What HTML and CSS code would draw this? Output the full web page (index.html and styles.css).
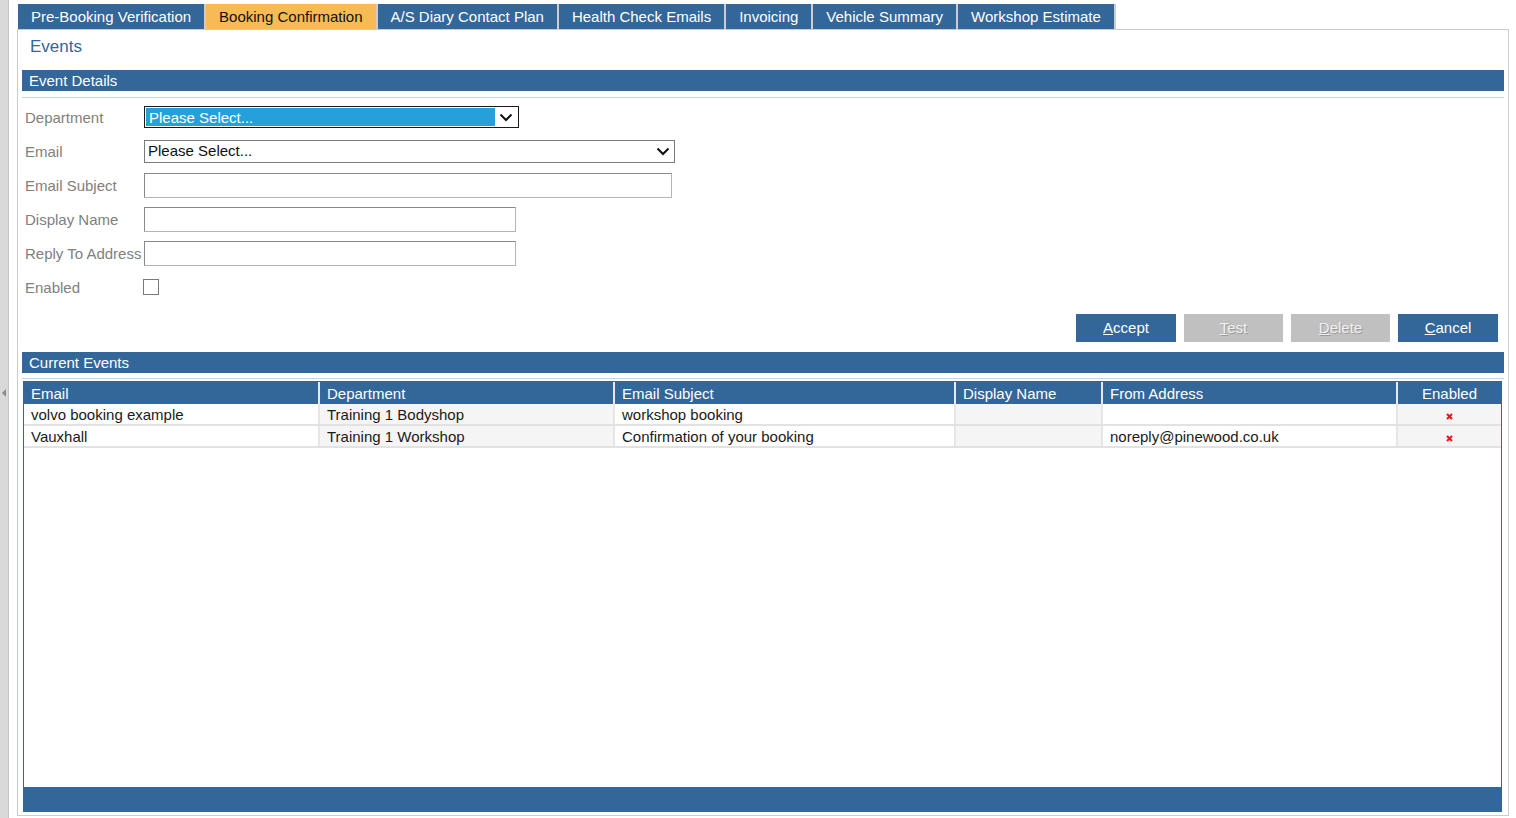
FILE: index.html
```html
<!DOCTYPE html>
<html>
<head>
	<meta charset="UTF-8">
	<title>Events</title>
	<link rel="stylesheet" href="styles.css">
</head>
<body>
<div class="side"><span class="side-arrow"></span></div>
<div class="page">
    <ul class="tabs">
        <li>Pre-Booking Verification</li>
        <li class="active">Booking Confirmation</li>
        <li>A/S Diary Contact Plan</li>
        <li>Health Check Emails</li>
        <li>Invoicing</li>
        <li>Vehicle Summary</li>
        <li>Workshop Estimate</li>
    </ul>

    <div class="panel">
        <h1 class="title">Events</h1>
        <div class="bar">Event Details</div>
        <div class="rule"></div>

        <div class="form">
            <div class="row">
                <label>Department</label>
                <div class="select dept">
                    <span class="sel-text">Please Select...</span>
                    <span class="sel-arrow"><svg width="14" height="9" viewBox="0 0 14 9"><path d="M1.5 1.5 L7 7 L12.5 1.5" fill="none" stroke="#111" stroke-width="2"/></svg></span>
                </div>
            </div>
            <div class="row">
                <label>Email</label>
                <div class="select email">
                    <span class="sel-text">Please Select...</span>
                    <span class="sel-arrow"><svg width="14" height="9" viewBox="0 0 14 9"><path d="M1.5 1.5 L7 7 L12.5 1.5" fill="none" stroke="#111" stroke-width="2"/></svg></span>
                </div>
            </div>
            <div class="row">
                <label>Email Subject</label>
                <input type="text" class="txt wide">
            </div>
            <div class="row">
                <label>Display Name</label>
                <input type="text" class="txt">
            </div>
            <div class="row">
                <label>Reply To Address</label>
                <input type="text" class="txt">
            </div>
            <div class="row">
                <label>Enabled</label>
                <span class="check"></span>
            </div>
        </div>

        <div class="buttons">
            <a href="javascript:;" class="btn"><u>A</u>ccept</a>
            <a href="javascript:;" class="btn off"><u>T</u>est</a>
            <a href="javascript:;" class="btn off"><u>D</u>elete</a>
            <a href="javascript:;" class="btn"><u>C</u>ancel</a>
        </div>

        <div class="bar bar2">Current Events</div>
        <div class="rule rule2"></div>

        <div class="grid">
            <table>
                <thead>
                    <tr>
                        <th class="c1">Email</th>
                        <th class="c2">Department</th>
                        <th class="c3">Email Subject</th>
                        <th class="c4">Display Name</th>
                        <th class="c5">From Address</th>
                        <th class="c6 mid">Enabled</th>
                    </tr>
                </thead>
                <tbody>
                    <tr>
                        <td>volvo booking example</td>
                        <td class="alt">Training 1 Bodyshop</td>
                        <td>workshop booking</td>
                        <td class="alt"></td>
                        <td></td>
                        <td class="alt mid"><svg width="7" height="7" viewBox="0 0 7 7"><path d="M1 1 L6 6 M6 1 L1 6" stroke="#e8141e" stroke-width="2"/></svg></td>
                    </tr>
                    <tr>
                        <td>Vauxhall</td>
                        <td class="alt">Training 1 Workshop</td>
                        <td>Confirmation of your booking</td>
                        <td class="alt"></td>
                        <td>noreply@pinewood.co.uk</td>
                        <td class="alt mid"><svg width="7" height="7" viewBox="0 0 7 7"><path d="M1 1 L6 6 M6 1 L1 6" stroke="#e8141e" stroke-width="2"/></svg></td>
                    </tr>
                </tbody>
            </table>
            <div class="grid-space"></div>
            <div class="grid-foot"></div>
        </div>
    </div>
</div>
</body>
</html>
```

FILE: styles.css
```css
body{
    margin: 0;
    display: flex;
    height: 818px;
    overflow: hidden;
    font-family: "Liberation Sans", Arial, sans-serif;
    font-size: 15px;
    background: #fff;
}
.side{
    width: 9px;
    flex: none;
    background-color: #d9d9d9;
    border-right: 1px solid #c4c4c4;
    padding-top: 389px;
    box-sizing: border-box;
}
.side-arrow{
    display: block;
    width: 0;
    height: 0;
    margin-left: 2px;
    border-top: 4px solid transparent;
    border-bottom: 4px solid transparent;
    border-right: 4px solid #8a8a8a;
}
.page{
    padding-left: 8px;
    width: 1492px;
}
.tabs{
    display: flex;
    margin: 4px 0 0 1px;
    padding: 0;
    height: 25px;
}
.tabs li{
    list-style: none;
    background-color: #336699;
    color: #fff;
    line-height: 24px;
    padding: 1px 13px 0;
    border-right: 2px solid #cdcdcd;
    white-space: nowrap;
}
.tabs li.active{
    background-color: #f6bb55;
    color: #111;
}
.panel{
    height: 787px;
    box-sizing: border-box;
    border: 1px solid #cccccc;
    padding: 0 4px 3px;
    display: flex;
    flex-direction: column;
}
.title{
    margin: 0;
    height: 40px;
    line-height: 33px;
    padding-left: 8px;
    font-size: 17px;
    font-weight: normal;
    color: #336699;
}
.bar{
    height: 21px;
    line-height: 21px;
    background-color: #336699;
    color: #fff;
    padding-left: 7px;
    flex: none;
}
.rule{
    margin-top: 6px;
    height: 1px;
    background-color: #c6d3e0;
    flex: none;
}
.form{
    margin-top: 2px;
}
.row{
    display: flex;
    align-items: center;
    height: 34px;
}
.row label{
    width: 119px;
    padding-left: 3px;
    color: #808080;
    flex: none;
}
.select{
    display: flex;
    box-sizing: border-box;
    background: #fff;
}
.select.dept{
    width: 375px;
    height: 22px;
    border: 1px solid #1a1a1a;
    padding: 1px;
}
.select.email{
    width: 531px;
    height: 23px;
    border: 1px solid #7a7a7a;
}
.sel-text{
    flex: 1;
    padding-left: 3px;
    line-height: 19px;
    color: #111;
}
.dept .sel-text{
    background-color: #26a0da;
    color: #fff;
}
.sel-arrow{
    width: 22px;
    display: flex;
    align-items: center;
    justify-content: center;
}
.txt{
    margin: 0;
    width: 372px;
    height: 25px;
    box-sizing: border-box;
    border: 1px solid #8a8a8a;
    border-right-color: #b5b5b5;
    border-bottom-color: #b5b5b5;
    padding: 0 4px;
    font: inherit;
}
.txt.wide{
    width: 528px;
}
.check{
    display: block;
    margin-left: -1px;
    width: 16px;
    height: 16px;
    box-sizing: border-box;
    border: 1px solid #7a7a7a;
    background: #fff;
}
.buttons{
    display: flex;
    justify-content: flex-end;
    gap: 8px;
    margin: 10px 6px 0 0;
    flex: none;
}
.btn{
    display: block;
    width: 100px;
    height: 28px;
    line-height: 28px;
    text-align: center;
    background-color: #336699;
    color: #fff;
    text-decoration: none;
}
.btn.off{
    width: 99px;
    background-color: #c0c0c0;
    color: #f0f0f0;
    text-shadow: 1px 1px 0 #9a9a9a;
}
.bar2{
    margin-top: 10px;
}
.rule2{
    margin-top: 5px;
}
.grid{
    margin: 2px 2px 0 1px;
    flex: 1;
    display: flex;
    flex-direction: column;
    border: 1px solid #336699;
    border-bottom: 0;
}
table{
    border-collapse: collapse;
    table-layout: fixed;
    width: 100%;
}
th{
    height: 22px;
    padding: 0 0 0 7px;
    background-color: #336699;
    color: #fff;
    font-weight: normal;
    text-align: left;
    border-right: 2px solid #e4ebf2;
    white-space: nowrap;
}
th:last-child{
    border-right: 0;
}
td{
    height: 20px;
    padding: 0 0 0 7px;
    color: #1a1a1a;
    border-right: 2px solid #e6e6e6;
    border-bottom: 2px solid #e2e2e2;
    white-space: nowrap;
}
td:last-child{
    border-right: 0;
}
td.alt{
    background-color: #f5f5f5;
}
.mid{
    text-align: center;
    padding: 0;
}
.c1{ width: 287px; }
.c2{ width: 286px; }
.c3{ width: 332px; }
.c4{ width: 138px; }
.c5{ width: 286px; }
.grid-space{
    flex: 1;
}
.grid-foot{
    height: 25px;
    background-color: #336699;
}
```
